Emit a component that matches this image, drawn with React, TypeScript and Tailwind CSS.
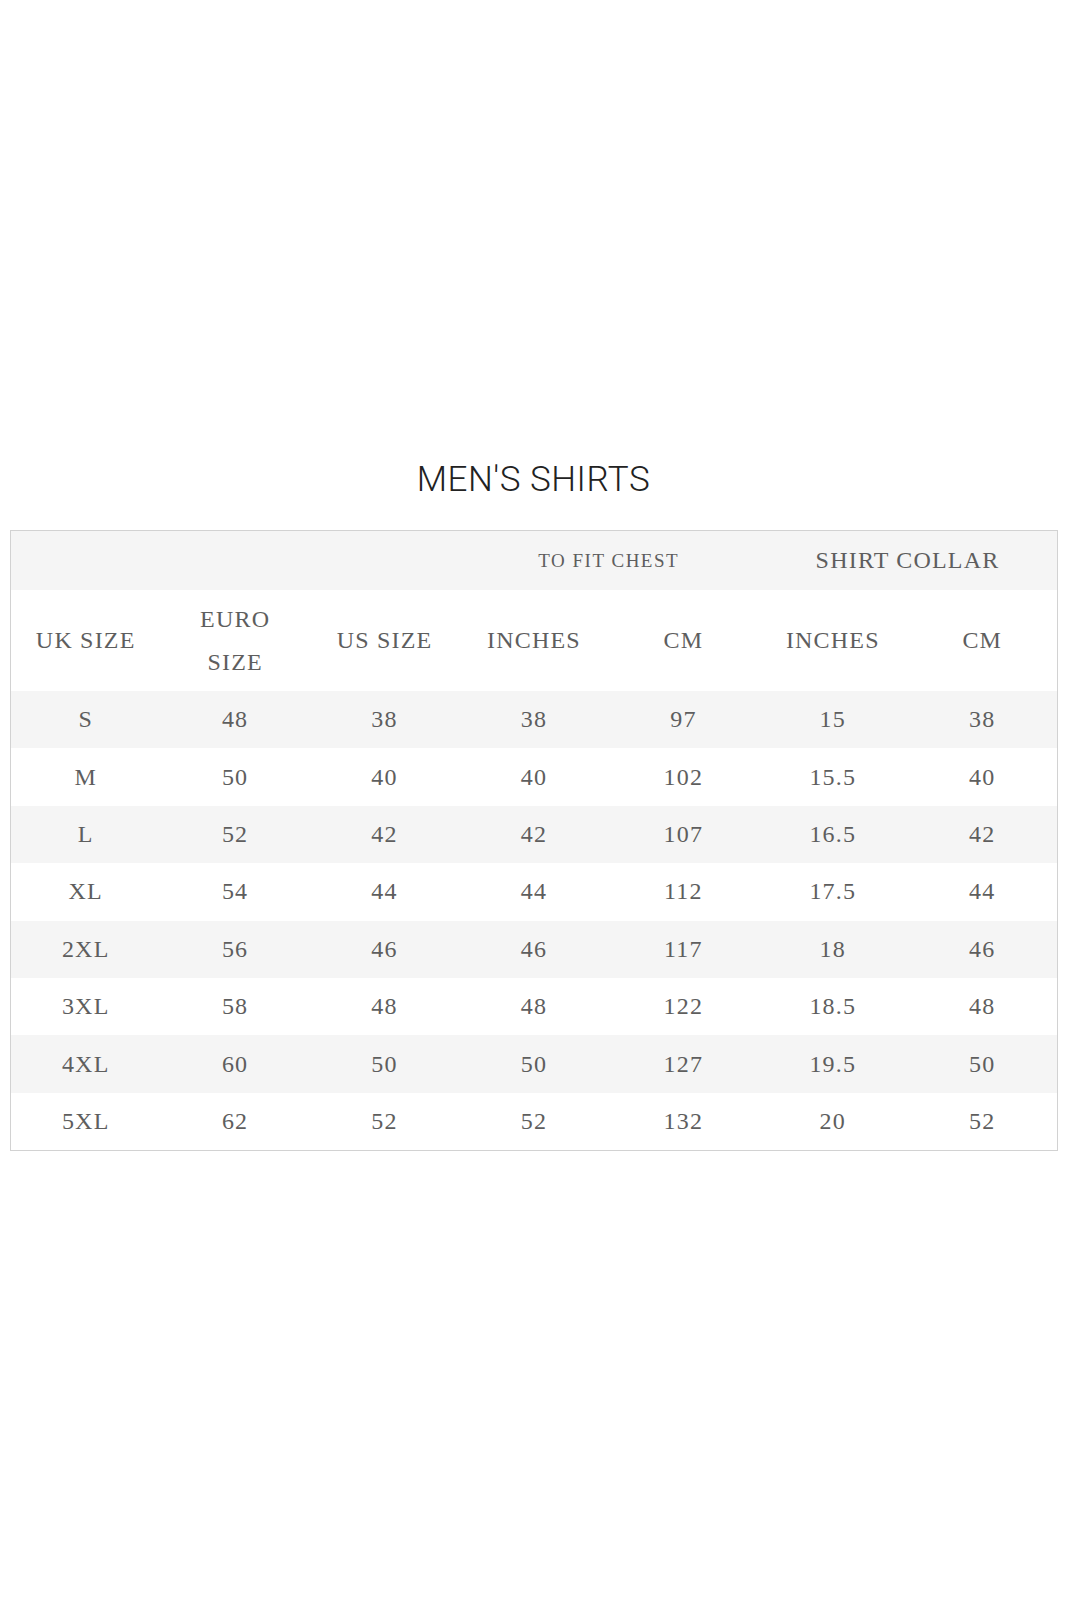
import React from "react";

const rows: string[][] = [
  ["S", "48", "38", "38", "97", "15", "38"],
  ["M", "50", "40", "40", "102", "15.5", "40"],
  ["L", "52", "42", "42", "107", "16.5", "42"],
  ["XL", "54", "44", "44", "112", "17.5", "44"],
  ["2XL", "56", "46", "46", "117", "18", "46"],
  ["3XL", "58", "48", "48", "122", "18.5", "48"],
  ["4XL", "60", "50", "50", "127", "19.5", "50"],
  ["5XL", "62", "52", "52", "132", "20", "52"],
];

export default function App() {
  return (
    <div className="w-[1067px] h-[1600px] bg-white flex flex-col pt-[460px]">
      <div
        className="text-center text-[35px] leading-[40px] font-light text-[#222] tracking-[0.5px]"
        style={{ fontFamily: "Roboto, 'Open Sans', sans-serif" }}
      >
        MEN'S SHIRTS
      </div>
      <div className="mt-[30px] ml-[10px] w-[1048px] border border-[#d2d2d2]">
        <table
          className="w-full table-fixed border-collapse text-[#5e5e5e] text-[24px] leading-[43px] tracking-[0.05em]"
          style={{ fontFamily: "'Liberation Serif', 'Times New Roman', serif" }}
        >
          <tbody>
            <tr className="bg-[#f5f5f5] h-[59px]">
              <td colSpan={3}></td>
              <td colSpan={2} className="text-center text-[19px] tracking-[0.08em] p-0">
                TO FIT CHEST
              </td>
              <td colSpan={2} className="text-center p-0">
                SHIRT COLLAR
              </td>
            </tr>
            <tr className="bg-white h-[101px]">
              <td className="text-center p-0">UK SIZE</td>
              <td className="text-center p-0">
                EURO
                <br />
                SIZE
              </td>
              <td className="text-center p-0">US SIZE</td>
              <td className="text-center p-0">INCHES</td>
              <td className="text-center p-0">CM</td>
              <td className="text-center p-0">INCHES</td>
              <td className="text-center p-0">CM</td>
            </tr>
            {rows.map((r, i) => (
              <tr
                key={r[0]}
                className={i % 2 === 0 ? "bg-[#f5f5f5] h-[57.4px]" : "bg-white h-[57.4px]"}
              >
                {r.map((c, j) => (
                  <td key={j} className="text-center p-0">
                    {c}
                  </td>
                ))}
              </tr>
            ))}
          </tbody>
        </table>
      </div>
    </div>
  );
}
